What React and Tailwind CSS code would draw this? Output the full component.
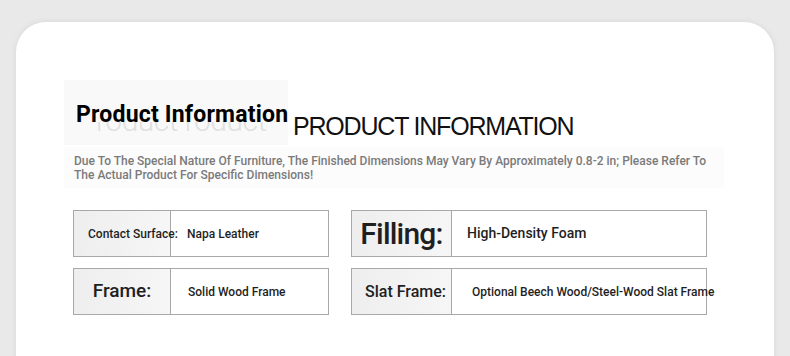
import React from "react";

const ROWS = [
  [
    {
      label: "Contact Surface:",
      value: "Napa Leather",
      labelClass: "justify-start pl-[14px] text-[12px]",
      valueClass: "pl-[16px] text-[12px]",
      wide: false,
    },
    {
      label: "Filling:",
      value: "High-Density Foam",
      labelClass: "justify-center text-[30px] tracking-[-0.8px]",
      valueClass: "pl-[15px] text-[14px]",
      wide: true,
    },
  ],
  [
    {
      label: "Frame:",
      value: "Solid Wood Frame",
      labelClass: "justify-center text-[19px]",
      valueClass: "pl-[17px] text-[12px]",
      wide: false,
    },
    {
      label: "Slat Frame:",
      value: "Optional Beech Wood/Steel-Wood Slat Frame",
      labelClass: "justify-center pl-[8px] text-[16px]",
      valueClass: "pl-[20px] text-[12px]",
      wide: true,
    },
  ],
];

const SpecBox = ({ item }) => (
  <div
    className={`flex h-[47px] border border-[#a8a8a8] ${
      item.wide ? "w-[356px]" : "w-[256px]"
    }`}
  >
    <div
      className={`flex shrink-0 items-center whitespace-nowrap bg-gradient-to-r from-[#eeeeee] to-[#f6f6f6] text-[#1f1f1f] font-medium border-r border-[#a8a8a8] ${
        item.wide ? "w-[100px]" : "w-[97px]"
      } ${item.labelClass}`}
    >
      <span className="relative z-10">{item.label}</span>
    </div>
    <div
      className={`flex min-w-0 flex-1 items-center whitespace-nowrap text-[#1f1f1f] font-medium ${item.valueClass}`}
    >
      {item.value}
    </div>
  </div>
);

export default function App() {
  return (
    <div
      className="w-[790px] h-[356px] overflow-hidden bg-[#e9e9e9] pt-[22px] px-[16px]"
      style={{ fontFamily: "Roboto, 'Liberation Sans', sans-serif" }}
    >
      <div className="h-[400px] bg-white rounded-t-[30px] shadow-[0_0_6px_rgba(0,0,0,0.08)] pt-[58px] pl-[48px]">
        {/* HEADER */}
        <div className="flex items-start">
          <div className="relative w-[224px] h-[65px] bg-[#f9f9f9] pl-[12px] pt-[21px]">
            <div className="absolute left-[32px] top-[42px] h-[13px] w-[192px] overflow-hidden">
              <div className="-mt-[16px] text-[30px] leading-[30px] text-[#e0e0e0] font-light whitespace-nowrap tracking-[-0.5px]">
                roduct roduct
              </div>
            </div>
            <h1 className="relative text-[23px] leading-[28px] font-bold text-black tracking-[0.2px] whitespace-nowrap">
              Product Information
            </h1>
          </div>
          <div
            className="ml-[5px] mt-[34px] text-[25px] leading-[25px] text-[#111] tracking-[-1.2px] whitespace-nowrap"
            style={{ fontFamily: "'Liberation Sans', Arial, sans-serif" }}
          >
            PRODUCT INFORMATION
          </div>
        </div>

        {/* NOTE */}
        <div className="w-[660px] bg-[#fcfcfc] pl-[10px] pt-[7px] pb-[6px] mt-[2px]">
          <p className="text-[12px] leading-[14px] font-medium text-[#7a7a7a] whitespace-nowrap">
            Due To The Special Nature Of Furniture, The Finished Dimensions May
            Vary By Approximately 0.8-2 in; Please Refer To
            <br />
            The Actual Product For Specific Dimensions!
          </p>
        </div>

        {/* SPECS */}
        <div className="mt-[22px] ml-[9px] flex flex-col gap-[11px]">
          {ROWS.map((row, i) => (
            <div key={i} className="flex gap-[22px]">
              {row.map((item) => (
                <SpecBox key={item.label} item={item} />
              ))}
            </div>
          ))}
        </div>
      </div>
    </div>
  );
}
